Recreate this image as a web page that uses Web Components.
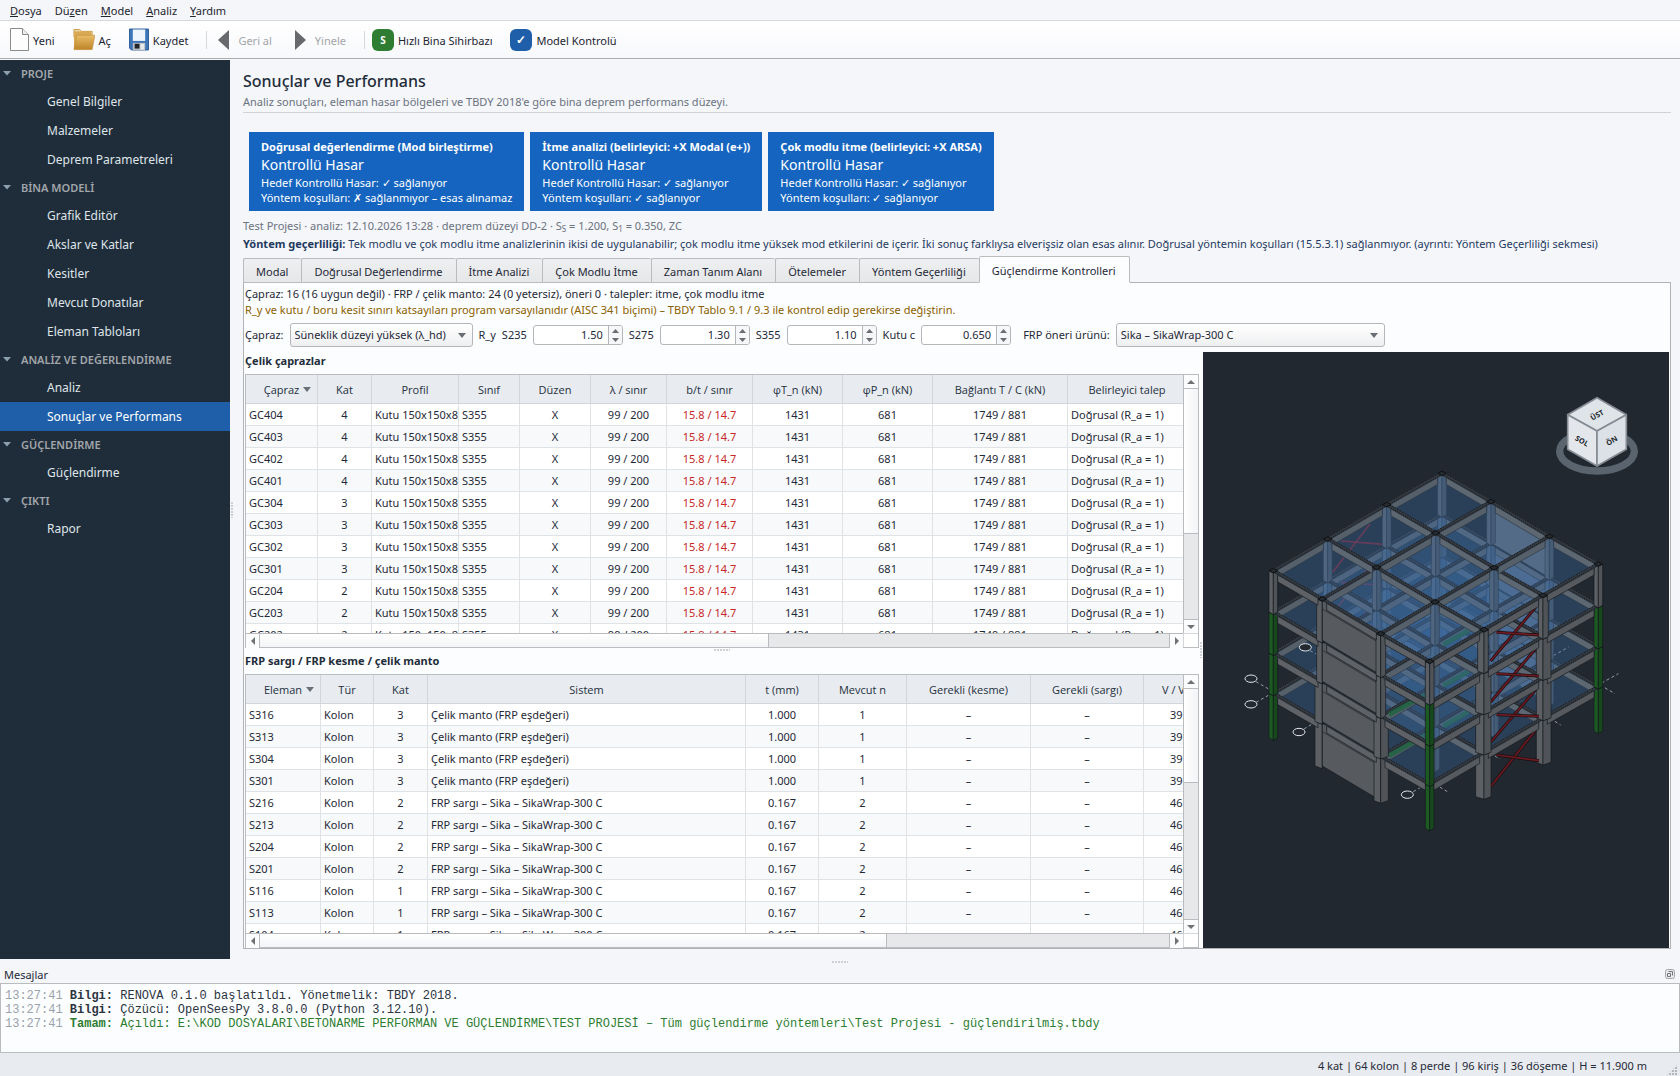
<!DOCTYPE html>
<html lang="tr">
<head>
<meta charset="utf-8">
<title>RENOVA – Sonuçlar ve Performans</title>
<style>
html,body{margin:0;height:100%}
body{font:11px/16px "Noto Sans","Open Sans",sans-serif;color:#1f2937;background:#f4f6f9;overflow:hidden}
</style>
</head>
<body>
<renova-app></renova-app>
<script>
const BASE = `*{box-sizing:border-box}button,input,select{font:inherit;color:inherit;margin:0}button{border:0;padding:0;background:none}`;
function define(name, html) {
  const t = document.createElement('template');
  customElements.define(name, class extends HTMLElement {
    connectedCallback() {
      if (this.shadowRoot) return;
      t.innerHTML = '<style>' + BASE + '</style>' + (typeof html === 'function' ? html(this) : html);
      this.attachShadow({mode: 'open'}).append(t.content.cloneNode(true));
    }
  });
}

/* ---------- menu and toolbar ---------- */
define('menu-bar', `<style>
:host{display:block;border-bottom:1px solid #d6d9dd;background:#f5f6f9}
nav{display:flex;gap:13px;padding:2px 10px;height:20px}
button{line-height:18px;color:#1c2530}
</style>
<nav><button><u>D</u>osya</button><button>Dü<u>z</u>en</button><button><u>M</u>odel</button><button><u>A</u>naliz</button><button><u>Y</u>ardım</button></nav>`);

define('tool-item', el => `<style>
:host{display:block}
button{display:flex;align-items:center;gap:4px;height:36px;color:#1c2530;white-space:nowrap}
button:disabled{color:#a3a6ab;gap:9px}
span{padding-top:2px}
</style>
<button ${el.hasAttribute('off') ? 'disabled' : ''}><slot name="icon"></slot><span><slot></slot></span></button>`);

define('tool-bar', `<style>
:host{display:block;background:linear-gradient(#fff,#f7f8fb);border-bottom:1px solid #aaaeb3}
div{display:flex;align-items:center;height:37px;padding:0 10px;gap:18px}
i{width:1px;height:18px;background:#d5d8dc}
svg{display:block}
.badge{display:grid;place-items:center;width:22px;height:22px;border-radius:6px;color:#fff;font-weight:700;font-size:10px;line-height:12px}
.g{background:#2e7d32}.b{background:#1f5faa;font-size:12px}
.first{margin-left:-7px}.next{margin-left:5px}.app{margin-left:-11px}
</style>
<div>
<tool-item><svg slot="icon" width="19" height="23" viewBox="0 0 19 23"><path d="M.5.5h12l6 6v16H.5z" fill="#fdfdfd" stroke="#8b8b8b"/><path d="M12.500.5v6h6" fill="#eee" stroke="#8b8b8b"/></svg>Yeni</tool-item>
<tool-item><svg slot="icon" width="22" height="23" viewBox="0 0 23 23"><defs><linearGradient id="fo" x2="0" y2="1"><stop stop-color="#e9bd68"/><stop offset="1" stop-color="#bd8429"/></linearGradient></defs><path d="M1 1h6l2 2h11v6H1z" fill="#ead6a8" stroke="#c79b4b"/><path d="M1 3h18v19H1z" fill="#d9a954"/><path d="M4 7h19l-3 15H1z" fill="url(#fo)" stroke="#c08d38" stroke-width=".6"/></svg>Aç</tool-item>
<tool-item><svg slot="icon" width="20" height="23" viewBox="0 0 21 23"><path d="M.5.500h20v22h-18l-2-2z" fill="#3c75b8" stroke="#2b5c98"/><path d="M4 1h13v12H4z" fill="#eef5fc"/><path d="M4 15h13v7.500H4z" fill="#b9bec4"/><path d="M6 16h5v5H6z" fill="#202428"/><path d="M12 16h4v6h-4z" fill="#e6e8ea"/></svg>Kaydet</tool-item>
<i></i>
<tool-item off class="first"><svg slot="icon" width="11" height="20"><path d="M11 0v20L0 10z" fill="#68696c"/></svg>Geri al</tool-item>
<tool-item off class="next"><svg slot="icon" width="11" height="20"><path d="M0 0v20l11-10z" fill="#68696c"/></svg>Yinele</tool-item>
<i></i>
<tool-item class="app"><span slot="icon" class="badge g">S</span>Hızlı Bina Sihirbazı</tool-item>
<tool-item><span slot="icon" class="badge b">✓</span>Model Kontrolü</tool-item>
</div>`);

/* ---------- side navigation ---------- */
define('nav-group', el => `<style>
:host{display:block}
h3{display:flex;align-items:center;margin:0;height:27px;padding-left:3px;font-size:11px;font-weight:600;color:#a2a6aa;gap:10px}
h3 svg{display:block}
ul{list-style:none;margin:0;padding:0}
a{display:block;height:29px;line-height:30px;padding-left:47px;color:#dfe5ea;text-decoration:none;font-size:12px}
a[aria-current]{background:#1f5faa;color:#fff}
</style>
<h3><svg width="8" height="5"><path d="M0 0h8L4 4.500z" fill="#8da0af"/></svg><slot></slot></h3>
<ul>${el.getAttribute('items').split('|').map(s => s[0] === '*' ? `<li><a href="#" aria-current="page">${s.slice(1)}</a></li>` : `<li><a href="#">${s}</a></li>`).join('')}</ul>`);

define('side-nav', `<style>:host{display:block;width:230px;flex:none;background:#1f2d3a}</style>
<nav-group items="Genel Bilgiler|Malzemeler|Deprem Parametreleri">PROJE</nav-group>
<nav-group items="Grafik Editör|Akslar ve Katlar|Kesitler|Mevcut Donatılar|Eleman Tabloları">BİNA MODELİ</nav-group>
<nav-group items="Analiz|*Sonuçlar ve Performans">ANALİZ VE DEĞERLENDİRME</nav-group>
<nav-group items="Güçlendirme">GÜÇLENDİRME</nav-group>
<nav-group items="Rapor">ÇIKTI</nav-group>`);

define('split-grip', el => `<style>
:host{display:flex;flex:none;align-items:center;justify-content:center}
i{display:block;${el.hasAttribute('vertical') ? 'width:2px;height:16px' : 'width:16px;height:2px'};background:radial-gradient(circle at 1px 1px,#cdd0d4 1px,transparent 1px) 0 0/3px 3px}
</style><i></i>`);

/* ---------- result cards ---------- */
define('result-card', `<style>
:host{display:block;background:#1565c0;color:#fff;padding:6px 12px 6px;white-space:nowrap}
b,div{display:block;line-height:17px}
b{font-weight:700;height:17px}
.lvl{font-size:14px;line-height:20px}
.m{line-height:16px}
.s{line-height:14px}
</style><b><slot name="title"></slot></b><div class="lvl">Kontrollü Hasar</div><div class="m">Hedef Kontrollü Hasar: ✓ sağlanıyor</div><div class="s">Yöntem koşulları: <slot></slot></div>`);

/* ---------- form fields ---------- */
define('combo-box', el => `<style>
:host{display:flex;align-items:center;gap:6px;white-space:nowrap}
span{position:relative;display:block}
select{appearance:none;height:24px;width:${el.getAttribute('w')}px;border:1px solid #b4b6b9;border-radius:3px;padding:0 20px 0 4px;background:linear-gradient(#fff,#eeeff0)}
svg{position:absolute;right:7px;top:10px;pointer-events:none}
</style><label for="f"><slot></slot></label><span><select id="f"><option>${el.getAttribute('value')}</option></select><svg width="8" height="5"><path d="M0 0h8L4 5z" fill="#6a6d71"/></svg></span>`);

define('spin-field', el => `<style>
:host{display:flex;align-items:center;gap:6px;white-space:nowrap}
div{display:flex;width:90px;height:20px;border:1px solid #b4b6b9;border-radius:3px;background:#fff;overflow:hidden}
input{flex:1;min-width:0;border:0;padding:0 5px;text-align:right;background:none}
p{margin:0;width:14px;border-left:1px solid #b4b6b9;background:#f6f7f8;display:flex;flex-direction:column}
button{flex:1;display:grid;place-items:center;height:9px}
svg{display:block}
</style><label for="f"><slot></slot></label><div><input id="f" type="text" inputmode="decimal" value="${el.getAttribute('value')}"><p><button aria-label="Artır"><svg width="7" height="4"><path d="M0 4h7L3.500 0z" fill="#6a6d71"/></svg></button><button aria-label="Azalt"><svg width="7" height="4"><path d="M0 0h7L3.500 4z" fill="#6a6d71"/></svg></button></p></div>`);

/* ---------- tabs ---------- */
define('tab-strip', el => `<style>
:host{display:flex;align-items:flex-end;height:27px;margin-bottom:-1px;position:relative}
button{height:25px;padding:2px 13px 0 12px;border:1px solid #b9bbbe;border-right-width:0;border-radius:2px 2px 0 0;background:linear-gradient(#eeeff1,#e6e7e9);color:#1f2937;white-space:nowrap}
button[aria-selected=true]{height:27px;border-right-width:1px;background:#fcfdfe;border-bottom-color:#fcfdfe}
</style>${el.getAttribute('tabs').split('|').map((s, i, a) => `<button role="tab" aria-selected="${i === a.length - 1}">${s}</button>`).join('')}`);

/* ---------- data grid ---------- */
define('scroll-strip', el => {
  const v = el.hasAttribute('vertical');
  return `<style>
:host{display:flex;flex-direction:${v ? 'column' : 'row'};background:#e7e8e9;min-width:0;min-height:0}
button{flex:none;width:14px;height:14px;display:grid;place-items:center;background:#fbfcfd;border:0 solid #b9bbbe;border-${v ? 'bottom' : 'right'}-width:1px}
button:last-child{border-${v ? 'bottom' : 'right'}-width:0;border-${v ? 'top' : 'left'}-width:1px}
div{flex:1;min-width:0;min-height:0}
i{display:block;background:linear-gradient(${v ? '90deg' : '180deg'},#fff,#f3f4f6);${v ? 'height' : 'width'}:${el.getAttribute('size')}%;${v ? 'width' : 'height'}:100%;border:0 solid #b9bbbe;border-${v ? 'bottom' : 'right'}-width:1px}
</style>
<button aria-label="Geri"><svg width="8" height="8"><path d="${v ? 'M0 6h8L4 2z' : 'M6 0v8L2 4z'}" fill="#6f7275"/></svg></button><div><i></i></div><button aria-label="İleri"><svg width="8" height="8"><path d="${v ? 'M0 2h8L4 6z' : 'M2 0v8l4-4z'}" fill="#6f7275"/></svg></button>`;
});

const GRIDS = {
  braces: {
    v: 63, h: 56,
    cols: [['Çapraz',72,'l'],['Kat',54],['Profil',87,'l'],['Sınıf',61,'l'],['Düzen',71],['λ / sınır',76],['b/t / sınır',86,'r'],['φT_n (kN)',90],['φP_n (kN)',90],['Bağlantı T / C (kN)',135],['Belirleyici talep',119,'l']],
    rows: ['404','403','402','401','304','303','302','301','204','203','202'].map(n => ['GC' + n, n[0], 'Kutu 150x150x8', 'S355', 'X', '99 / 200', '15.8 / 14.7', '1431', '681', '1749 / 881', 'Doğrusal (R_a = 1)'])
  },
  frp: {
    v: 41, h: 69,
    cols: [['Eleman',75,'l'],['Tür',53,'l'],['Kat',54],['Sistem',318,'l'],['t (mm)',73],['Mevcut n',88],['Gerekli (kesme)',124],['Gerekli (sargı)',113],['V / V',90,'cut']],
    rows: ['316','313','304','301','216','213','204','201','116','113','104'].map(n => n[0] === '3'
      ? ['S' + n, 'Kolon', '3', 'Çelik manto (FRP eşdeğeri)', '1.000', '1', '–', '–', '39']
      : ['S' + n, 'Kolon', n[0], 'FRP sargı – Sika – SikaWrap-300 C', '0.167', '2', '–', '–', '46'])
  }
};
define('data-grid', el => {
  const g = GRIDS[el.getAttribute('data')];
  const total = g.cols.reduce((s, c) => s + c[1], 0);
  return `<style>
:host{display:grid;grid-template:minmax(0,1fr) 14px/minmax(0,1fr) 15px;border:1px solid #b9bcc0;background:#fff;min-height:0}
.view{overflow:hidden}
table{border-collapse:separate;border-spacing:0;table-layout:fixed;width:${total}px}
th{height:29px;padding:1px 0 0;font-family:"Open Sans","Noto Sans",sans-serif;font-weight:500;background:#e8ebf0;border:0 solid #d2d6db;border-width:0 1px 1px 0;white-space:nowrap;color:#243140}
th div{display:grid;grid-template-columns:1fr auto 1fr;align-items:center}
th svg{margin-left:4px}
td{height:22px;padding:0;text-align:center;border:0 solid #e0e3e6;border-width:0 1px 1px 0;white-space:nowrap;overflow:hidden}
tr:nth-child(even) td{background:#f7f9fa}
td.l{text-align:left;padding-left:3px}
td.r{color:#c62828}
th.cut{text-align:left;padding-left:18px}
td.cut{text-align:left;padding-left:26px}
.sv{border-left:1px solid #b9bbbe}.sh{border-top:1px solid #b9bbbe}
.c{border:solid #d5d7da;border-width:1px 0 0 1px}
</style>
<div class="view"><table><colgroup>${g.cols.map(c => `<col style="width:${c[1]}px">`).join('')}</colgroup>
<thead><tr>${g.cols.map((c, i) => `<th class="${c[2] === 'cut' ? 'cut' : ''}">${i ? c[0] : `<div><span></span>${c[0]}<svg width="8" height="5"><path d="M0 0h8L4 5z" fill="#6a7077"/></svg></div>`}</th>`).join('')}</tr></thead>
<tbody>${g.rows.map(r => `<tr>${r.map((t, i) => `<td class="${g.cols[i][2] || ''}">${t}</td>`).join('')}</tr>`).join('')}</tbody></table></div>
<scroll-strip class="sv" vertical size="${g.v}"></scroll-strip><scroll-strip class="sh" size="${g.h}"></scroll-strip><div class="c"></div>`;
});

/* ---------- 3D building ---------- */
function drawBuilding() {
  const U = [[0,0],[-166,94],[-343,197],[-506,292]], V = [[0,0],[147,85],[322,189],[469,272]];
  const Z = [0,124,247,368,501];
  const P = (i, j, k) => [726 + U[i][0] + V[j][0], 343 + U[i][1] + V[j][1] + Z[k]];
  const out = [];
  const poly = (pts, fill, extra = '') => out.push(`<polygon points="${pts.map(p => p.join()).join(' ')}" fill="${fill}" ${extra}/>`);
  const line = (a, b, c, w, extra = '') => out.push(`<line x1="${a[0]}" y1="${a[1]}" x2="${b[0]}" y2="${b[1]}" stroke="${c}" stroke-width="${w}" ${extra}/>`);
  const edge = 'stroke="#14181c" stroke-width="2"';
  const column = (i, j, k) => {
    const [x, y] = P(i, j, k), yb = P(i, j, k + 1)[1];
    const corner = (i === 3 && j === 0) || (i === 0 && j === 3) || (i === 3 && j === 3);
    const facade = i === 3 || j === 3;
    const green = corner && k > 0;
    let l = 13, r = 13;
    if (i === 3 && j === 1) { l = k > 1 ? 22 : 17; r = 3; }
    if (i === 3 && j === 2) { l = k > 1 ? 20 : 14; r = k > 1 ? 23 : 15; }
    if (j === 3 && i === 2) { l = k ? 25 : 19; r = k ? 21 : 13; }
    if (j === 3 && i === 1) { l = k ? 20 : 14; r = k ? 24 : 16; }
    const A = green ? '#1c5a22' : facade ? '#5c6064' : '#5a626b', B = green ? '#17491c' : facade ? '#505458' : '#4a525b';
    const s = facade ? edge : 'stroke="#2a333e" stroke-width="2"';
    poly([[x - l, y], [x, y + 7], [x, yb + 8], [x - l, yb]], A, s);
    poly([[x, y + 7], [x + r, y], [x + r, yb], [x, yb + 8]], B, s);
  };
  const beam = (a, b, facade, side) => {
    const dx = b[0] - a[0], f = (b[1] - a[1]) / dx;
    const s = Math.sign(dx), a2 = [a[0] + 13 * s, a[1] + 13 * f * s + 5], b2 = [b[0] - 13 * s, b[1] - 13 * f * s + 5];
    poly([a2, b2, [b2[0], b2[1] + 21], [a2[0], a2[1] + 21]], facade ? (side ? '#565a5e' : '#5e6266') : (side ? '#55606b' : '#5c6772'), facade ? edge : 'stroke="#2b3743" stroke-width="2"');
    line(a, b, '#343a41', 11);
    line([a[0], a[1] - 5], [b[0], b[1] - 5], '#12161a', 2.500, 'stroke-dasharray="5 4"');
    line([a[0], a[1] + 3], [b[0], b[1] + 3], '#12161a', 2.500, 'stroke-dasharray="4 3"');
  };
  const dash = (a, b) => line(a, b, '#aeb6be', 2.500, 'stroke-dasharray="9 8"');
  dash([330,875],[400,912]); dash([168,968],[220,998]); dash([168,1030],[230,995]); dash([312,1110],[370,1075]); dash([640,1298],[700,1262]);
  dash([1060,890],[1106,864]); dash([1205,972],[1255,944]); dash([1200,978],[1245,1004]); dash([1050,1078],[1082,1098]); dash([870,1182],[900,1200]); dash([705,1275],[742,1298]);
  for (let k = 3; k >= 0; k--) {
    const order = [];
    for (let i = 0; i < 4; i++) for (let j = 0; j < 4; j++) order.push([i, j]);
    order.sort((a, b) => a[0] + a[1] - b[0] - b[1]);
    /* shear wall of the rear-right face */
    const q1 = P(0, 1, k), q2 = P(0, 2, k), q3 = P(0, 2, k + 1), q4 = P(0, 1, k + 1);
    poly([q1, q2, q3, q4], '#606a75', 'stroke="#2a333d" stroke-width="2"');
    /* rear-left bracing */
    if (k < 3) {
      const a = P(2, 0, k), b = P(1, 0, k), h = Z[k + 1] - Z[k];
      line([a[0] + 15, a[1] + 100], [b[0] - 50, b[1] + 58], '#7c2430', 5);
      line([a[0] + 40, a[1] + 6], [b[0] - 8, b[1] + h - 5], '#7c2430', 5);
    }
    for (const [i, j] of order) {
      if (i === 3 && j === 2) {
        const a = P(3, 1, k), b = P(3, 2, k), c = P(3, 2, k + 1), d = P(3, 1, k + 1);
        poly([a, b, c, d], '#575b5f', edge);
        line([a[0], a[1] + 30], [b[0], b[1] + 30], '#1c2024', 2);
      }
      if (i === 2 && j === 3) {
        const a = P(2, 3, k), b = P(1, 3, k), h = Z[k + 1] - Z[k];
        const p = [a[0] + 20, a[1] + h - 30], q = [b[0] - 22, b[1] + 36];
        line(p, q, '#1b0d10', 9); line(p, q, '#6b1b21', 5);
        const m = [a[0] + 38, a[1] + 8], n = [b[0] - 12, b[1] + h - 5];
        line(m, n, '#1b0d10', 9); line(m, n, '#6b1b21', 5);
      }
      column(i, j, k);
    }
    for (let i = 0; i < 3; i++) for (let j = 0; j < 3; j++)
      poly([P(i, j, k), P(i + 1, j, k), P(i + 1, j + 1, k), P(i, j + 1, k)], '#3f70aa', 'fill-opacity=".34"');
    for (let s = 0; s < 4; s++) for (let n = 0; n < 3; n++) {
      beam(P(n, s, k), P(n + 1, s, k), s === 3, 1);
      beam(P(s, n, k), P(s, n + 1, k), s === 3, 0);
    }
    if (k > 0) {
      const g = (a, b) => line(a, b, '#1d6440', 15, 'opacity=".8"');
      const a = P(3, 2, k), c = P(2, 2, k);
      if (k > 1) g([a[0] + 25, a[1] - (k === 2 ? 4 : 2)], [a[0] + 150, a[1] - 72]);
      g([c[0] + 25, c[1] + 4], [c[0] + 100, c[1] - 38]);
    }
    for (let i = 0; i < 4; i++) for (let j = 0; j < 4; j++) {
      const [x, y] = P(i, j, k);
      poly([[x - 13, y], [x, y - 7], [x + 13, y], [x, y + 7]], k ? '#33404c' : '#262b30', 'stroke="#0e1114" stroke-width="3"');
    }
  }
  for (const [x, y] of [[316,865],[153,959],[153,1036],[297,1119],[622,1307]])
    out.push(`<ellipse cx="${x}" cy="${y}" rx="18" ry="11" fill="#222931" stroke="#e2e8ee" stroke-width="3"/>`);
  return out.join('');
}
define('building-view', () => `<style>
:host{display:block;background:#212830;min-width:0;min-height:0;overflow:hidden}
svg{display:block;width:100%;height:100%}
text{font:700 22px "Open Sans",sans-serif;fill:#20262c;text-anchor:middle}
</style>
<svg viewBox="9 -21 1398 1788" role="img" aria-label="Bina modeli">${drawBuilding()}
<ellipse cx="1191" cy="277" rx="112" ry="59" fill="none" stroke="#5a646e" stroke-width="22"/>
<g stroke="#858c93" stroke-width="5" stroke-linejoin="round"><path d="M1191 116l88 51-88 49-88-49z" fill="#dfe4e9"/><path d="M1103 167l88 49v105l-88-50z" fill="#e3e7ec"/><path d="M1279 167l-88 49v105l88-50z" fill="#dce1e7"/></g>
<text transform="translate(1195 175) rotate(-30)">ÜST</text><text transform="translate(1142 253) rotate(30)">SOL</text><text transform="translate(1239 252) rotate(-30)">ÖN</text>
</svg>`);

/* ---------- results page ---------- */
define('results-page', `<style>
:host{display:flex;flex-direction:column;flex:1;min-width:0;padding:10px 9px 10px 13px}
h1{margin:0;font-size:16px;line-height:22px;font-weight:500;color:#1f2d3a}
.sub{margin:0;line-height:20px;color:#6b7280;border-bottom:1px solid #cfd3d8}
.cards{display:flex;gap:6px;padding:19px 6px 6px}
.meta,.note{margin:0;line-height:18px;white-space:nowrap}
.meta{color:#6b7280}
.note{color:#1f3a5f;padding-bottom:3px}
sub{font-size:8px;line-height:8px;vertical-align:-2px}
.pane{flex:1;min-height:0;display:flex;flex-direction:column;border:1px solid #b0b2b5;background:#fcfdfe;padding:3px 1px 0}
.pane p{margin:0;line-height:16px}
.warn{color:#8b6000}
.form{display:flex;align-items:center;gap:6px;margin:5px 0}
.body{flex:1;min-height:0;display:flex}
.left{flex:954 1 0;min-width:0;display:flex;flex-direction:column}
building-view{flex:466 1 0}
section{flex:1 1 0;min-height:0;display:flex;flex-direction:column}
h2{margin:0;font-size:11px;line-height:18px;height:22px;font-weight:700;color:#1f2d3a}
data-grid{flex:1}
.v{width:4px}.h{height:4px}
.frp{margin-left:6px}
</style>
<h1>Sonuçlar ve Performans</h1>
<p class="sub">Analiz sonuçları, eleman hasar bölgeleri ve TBDY 2018'e göre bina deprem performans düzeyi.</p>
<div class="cards">
<result-card><span slot="title">Doğrusal değerlendirme (Mod birleştirme)</span>✗ sağlanmıyor – esas alınamaz</result-card>
<result-card><span slot="title">İtme analizi (belirleyici: +X Modal (e+))</span>✓ sağlanıyor</result-card>
<result-card><span slot="title">Çok modlu itme (belirleyici: +X ARSA)</span>✓ sağlanıyor</result-card>
</div>
<p class="meta">Test Projesi · analiz: 12.10.2026 13:28 · deprem düzeyi DD-2 · S<sub>S</sub> = 1.200, S<sub>1</sub> = 0.350, ZC</p>
<p class="note"><b>Yöntem geçerliliği:</b> Tek modlu ve çok modlu itme analizlerinin ikisi de uygulanabilir; çok modlu itme yüksek mod etkilerini de içerir. İki sonuç farklıysa elverişsiz olan esas alınır. Doğrusal yöntemin koşulları (15.5.3.1) sağlanmıyor. (ayrıntı: Yöntem Geçerliliği sekmesi)</p>
<tab-strip role="tablist" tabs="Modal|Doğrusal Değerlendirme|İtme Analizi|Çok Modlu İtme|Zaman Tanım Alanı|Ötelemeler|Yöntem Geçerliliği|Güçlendirme Kontrolleri"></tab-strip>
<div class="pane">
<p>Çapraz: 16 (16 uygun değil) · FRP / çelik manto: 24 (0 yetersiz), öneri 0 · talepler: itme, çok modlu itme</p>
<p class="warn">R_y ve kutu / boru kesit sınırı katsayıları program varsayılanıdır (AISC 341 biçimi) – TBDY Tablo 9.1 / 9.3 ile kontrol edip gerekirse değiştirin.</p>
<div class="form">
<combo-box w="183" value="Süneklik düzeyi yüksek (λ_hd)">Çapraz:</combo-box>
<span>R_y</span>
<spin-field value="1.50">S235</spin-field><spin-field value="1.30">S275</spin-field><spin-field value="1.10">S355</spin-field><spin-field value="0.650">Kutu c</spin-field>
<combo-box class="frp" w="269" value="Sika – SikaWrap-300 C">FRP öneri ürünü:</combo-box>
</div>
<div class="body"><div class="left">
<section><h2>Çelik çaprazlar</h2><data-grid data="braces"></data-grid></section>
<split-grip class="h"></split-grip>
<section><h2>FRP sargı / FRP kesme / çelik manto</h2><data-grid data="frp"></data-grid></section>
</div><split-grip class="v" vertical></split-grip><building-view></building-view></div>
</div>`);

/* ---------- messages and status ---------- */
define('message-dock', `<style>
:host{display:block}
split-grip{height:5px}
header{display:flex;justify-content:space-between;align-items:center;height:19px;padding:0 5px 0 4px;line-height:19px}
header span{padding-top:1px}
svg{display:block}
.log{height:70px;border:1px solid #b9bbbe;background:#fcfdfe;padding:5px 4px;font:12px/14px "Liberation Mono",monospace;color:#2b3440}
.log p{margin:0;white-space:pre}
time{color:#9aa3ab}.ok{color:#2e7d32}
</style>
<split-grip></split-grip>
<header><span>Mesajlar</span><button aria-label="Ayır"><svg width="10" height="10"><rect x=".5" y=".5" width="9" height="9" rx="2" fill="#e8e9ea" stroke="#a4a7aa"/><path d="M3.500 2.500h4v4M2.500 4.500h3v3h-3z" fill="none" stroke="#74777a"/></svg></button></header>
<div class="log"><p><time>13:27:41</time> <b>Bilgi:</b> RENOVA 0.1.0 başlatıldı. Yönetmelik: TBDY 2018.</p><p><time>13:27:41</time> <b>Bilgi:</b> Çözücü: OpenSeesPy 3.8.0.0 (Python 3.12.10).</p><p><time>13:27:41</time> <span class="ok"><b>Tamam:</b> Açıldı: E:\\KOD DOSYALARI\\BETONARME PERFORMAN VE GÜÇLENDİRME\\TEST PROJESİ – Tüm güçlendirme yöntemleri\\Test Projesi - güçlendirilmiş.tbdy</span></p></div>`);

define('status-line', `<style>
:host{display:flex;justify-content:flex-end;align-items:center;height:23px;background:#e8ebef;padding-right:2px;line-height:22px}
span{padding:3px 19px 0 0}
i{width:12px;height:12px;align-self:flex-end;background:radial-gradient(circle at 1px 1px,#b3b7bc 1px,transparent 1px) 0 0/3px 3px;clip-path:polygon(100% 0,100% 100%,0 100%)}
</style><span>4 kat | 64 kolon | 8 perde | 96 kiriş | 36 döşeme | H = 11.900 m</span><i></i>`);

define('renova-app', `<style>
:host{display:flex;flex-direction:column;height:100vh}
main{flex:1;min-height:0;display:flex;padding-top:1px}
.g{width:4px;margin-right:-4px;position:relative}
</style>
<menu-bar></menu-bar><tool-bar></tool-bar>
<main><side-nav></side-nav><split-grip class="g" vertical></split-grip><results-page></results-page></main>
<message-dock></message-dock><status-line></status-line>`);
</script>
</body>
</html>
